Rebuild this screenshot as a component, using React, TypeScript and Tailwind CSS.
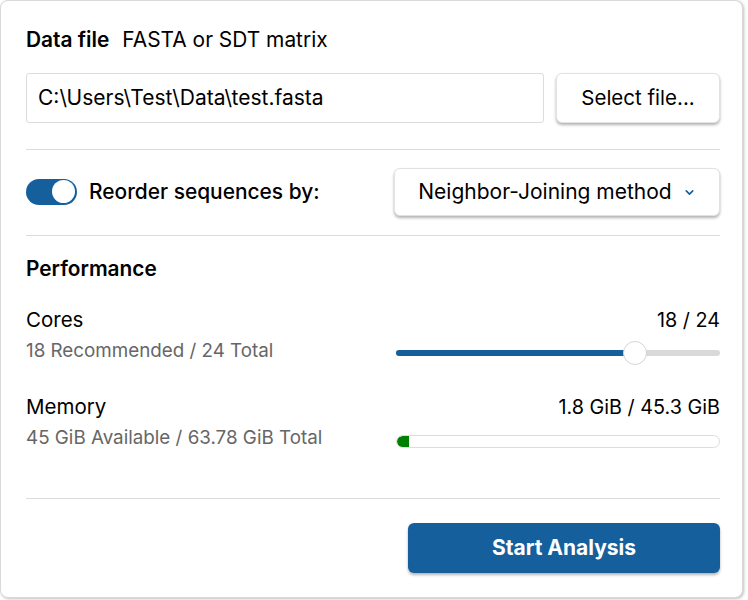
import { ChevronDown } from 'lucide-react';

const BLUE = 'bg-[#155f9d]';

function Toggle() {
  return (
    <div className={`w-[51px] h-[26px] rounded-full ${BLUE} flex items-center justify-end pr-[2px]`}>
      <div className="w-[23px] h-[23px] rounded-full bg-white" />
    </div>
  );
}

function ResourceRow({
  label,
  hint,
  value,
  children,
}: {
  label: string;
  hint: string;
  value: string;
  children: React.ReactNode;
}) {
  return (
    <div className="flex items-start justify-between">
      <div>
        <p className="text-[20.5px] leading-[26px] text-black">{label}</p>
        <p className="text-[18.8px] leading-[24px] text-[#666] mt-[6px]">{hint}</p>
      </div>
      <div className="w-[324px] flex flex-col items-end">
        <p className="text-[19.8px] leading-[26px] text-black">{value}</p>
        {children}
      </div>
    </div>
  );
}

export default function App() {
  return (
    <div className="w-[748px] h-[600px] bg-white" style={{ fontFamily: 'Inter, "Noto Sans", sans-serif' }}>
      <div className="w-[743px] h-[598px] bg-white rounded-[8px] border border-[#d9d9d9] shadow-[1px_1px_3px_rgba(0,0,0,0.25)] pl-[25px] pr-[22px] pt-[26px]">
        {/* Data file */}
        <div className="flex items-baseline gap-[13px] text-[20.9px] leading-[26px] text-black">
          <span className="font-semibold">Data file</span>
          <span>FASTA or SDT matrix</span>
        </div>
        <div className="flex gap-[12px] mt-[20px]">
          <div className="flex-1 h-[50px] border border-[#dcdcdc] rounded-[3px] flex items-center px-[11px] text-[21px] text-black">
            C:\Users\Test\Data\test.fasta
          </div>
          <button className="w-[164px] h-[50px] rounded-[6px] bg-white border border-[#e2e2e2] shadow-[0_2px_3px_rgba(0,0,0,0.3)] text-[20.5px] text-black">
            Select file...
          </button>
        </div>

        <div className="h-px bg-[#dcdcdc] mt-[26px]" />

        {/* Reorder */}
        <div className="flex items-center justify-between mt-[18px]">
          <div className="flex items-center gap-[12px]">
            <Toggle />
            <span className="text-[20.9px] font-medium text-black">Reorder sequences by:</span>
          </div>
          <button className="w-[326px] h-[48px] rounded-[6px] bg-white border border-[#e2e2e2] shadow-[0_2px_3px_rgba(0,0,0,0.3)] flex items-center justify-center gap-[11px] text-[21px] text-black">
            Neighbor-Joining method
            <ChevronDown size={13} strokeWidth={3} className="text-[#155f9d]" />
          </button>
        </div>

        <div className="h-px bg-[#dcdcdc] mt-[19px]" />

        {/* Performance */}
        <p className="text-[20.8px] leading-[26px] font-semibold text-black mt-[20px]">Performance</p>

        <div className="mt-[25px]">
          <ResourceRow label="Cores" hint="18 Recommended / 24 Total" value="18 / 24">
            <div className="relative w-full h-[6px] mt-[17px] rounded-full bg-[#d9d9d9]">
              <div className={`h-full w-[72%] rounded-full ${BLUE}`} />
              <div className="absolute top-[-9px] left-[227px] w-[24px] h-[24px] rounded-full bg-white border border-[#d4d4d4]" />
            </div>
          </ResourceRow>
        </div>

        <div className="mt-[31px]">
          <ResourceRow label="Memory" hint="45 GiB Available / 63.78 GiB Total" value="1.8 GiB / 45.3 GiB">
            <div className="w-full h-[13px] mt-[15px] rounded-full border border-[#dcdcdc] bg-white overflow-hidden">
              <div className="h-full w-[12px] bg-[#008000] rounded-l-full" />
            </div>
          </ResourceRow>
        </div>

        <div className="h-px bg-[#dcdcdc] mt-[48px]" />

        <div className="flex justify-end mt-[24px]">
          <button className={`w-[312px] h-[50px] rounded-[6px] ${BLUE} text-white text-[21px] font-bold shadow-[0_2px_3px_rgba(0,0,0,0.3)]`}>
            Start Analysis
          </button>
        </div>
      </div>
    </div>
  );
}
